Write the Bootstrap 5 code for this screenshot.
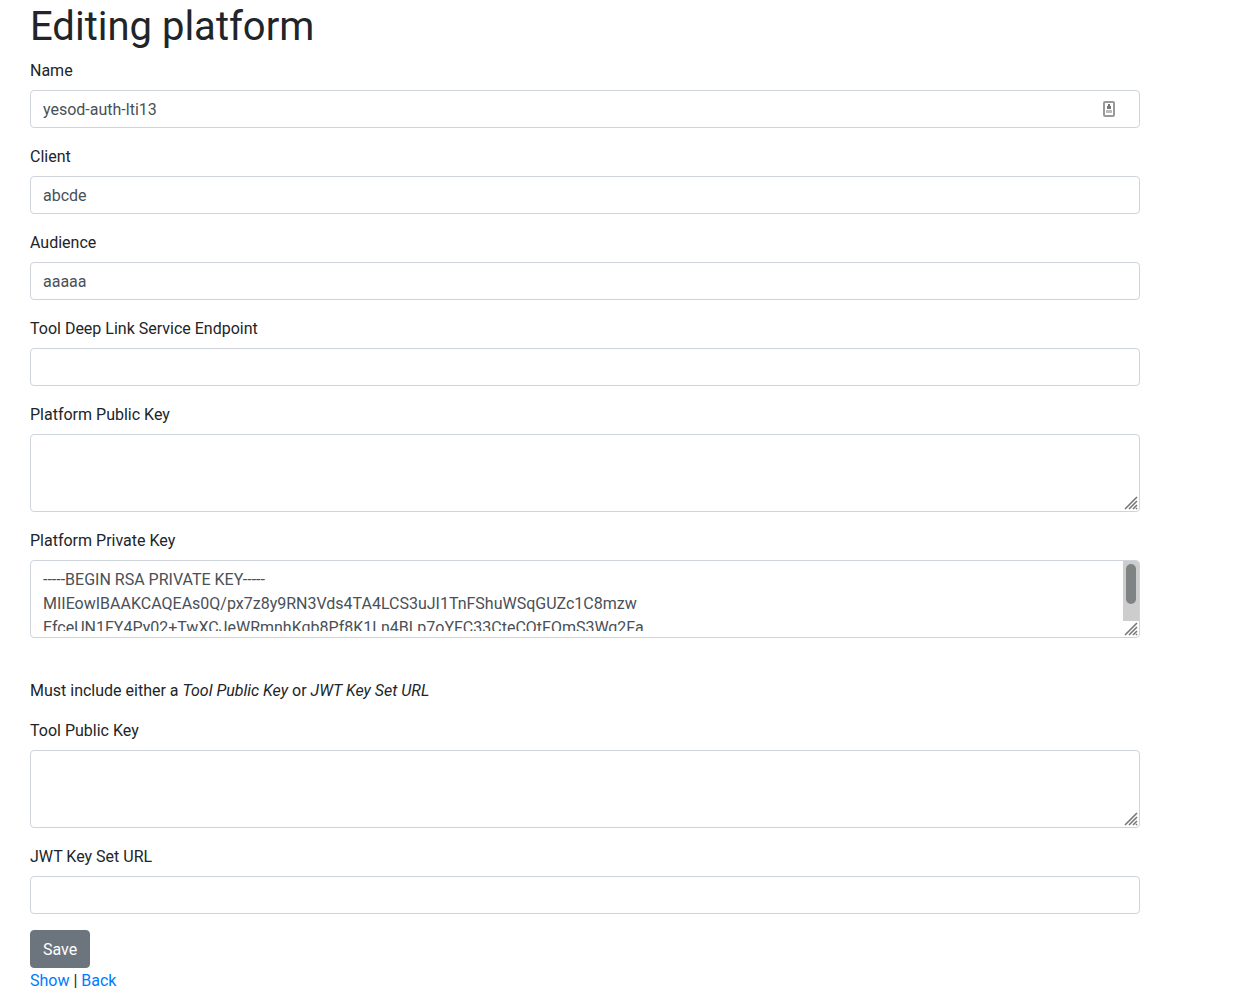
<!DOCTYPE html>
<html lang="en">
<head>
<meta charset="utf-8">
<meta name="viewport" content="width=device-width, initial-scale=1">
<title>Editing platform</title>
<link href="https://cdn.jsdelivr.net/npm/bootstrap@5.3.0/dist/css/bootstrap.min.css" rel="stylesheet">
<style>
  body { font-family: Roboto, "Liberation Sans", sans-serif; color: #212529; }
  .platform-page { max-width: 1140px; padding: 3px 15px 8px; margin-left: 15px; margin-right: 15px; }
  .platform-page h1 { font-size: 40px; font-weight: 400; margin-bottom: 7px; }
  .field { padding-top: 1px; margin-bottom: 16px; }
  .field label { display: block; margin-bottom: 7px; }
  .key-hint { padding-top: 1px; margin-bottom: 15px; }
  .page-links { padding-top: 1px; }
  .form-control, .key-text { color: #495057; }
  .form-control { border-color: #ced4da; border-radius: 4px; padding-top: 7px; padding-bottom: 5px; }
  .form-control.key-box { position: relative; padding-top: 6px; padding-bottom: 6px; }
  .key-text { display: block; width: 100%; height: 64px; padding: 1px 0 0; border: 0; outline: 0; background: transparent; resize: none; overflow: hidden; line-height: 24px; }
  .key-grip { position: absolute; right: 0; bottom: 0; }
  .key-scroll { position: absolute; top: 0; right: 0; width: 16px; height: 60px; padding: 3px; background: #cdcdcd; border-top-right-radius: 3px; }
  .key-thumb { width: 10px; height: 40px; border-radius: 5px; background: #7f8383; }
  .name-icon { position: absolute; right: 25px; top: 11px; }
  .btn-save { background: #6c757d; border-color: #6c757d; color: #fff; border-radius: 4px; padding-top: 7px; padding-bottom: 5px; }
  a { color: #007bff; text-decoration: none; }
</style>
<script src="https://cdn.jsdelivr.net/npm/bootstrap@5.3.0/dist/js/bootstrap.bundle.min.js"></script>
</head>
<body>
<svg class="d-none" aria-hidden="true">
  <symbol id="grip" viewBox="0 0 16 16"><path d="M2 14 14 2M6 14l8-8M10 14l4-4M13 14l1-1" fill="none" stroke="#777" stroke-width="1.6"/></symbol>
</svg>
<main class="platform-page">
  <h1>Editing platform</h1>
  <form>
    <div class="field">
      <label for="name">Name</label>
      <div class="position-relative">
        <input class="form-control" id="name" type="text" value="yesod-auth-lti13">
        <svg class="name-icon" width="12" height="16" viewBox="0 0 12 16" aria-hidden="true"><rect x="1" y="1" width="10" height="14" rx="1" fill="#fff" stroke="#999" stroke-width="2"/><path d="M5 3h2v2h1v3H4V5h1z" fill="#777"/><path d="M3 9h6v3H3z" fill="#bbb"/></svg>
      </div>
    </div>
    <div class="field">
      <label for="client">Client</label>
      <input class="form-control" id="client" type="text" value="abcde">
    </div>
    <div class="field">
      <label for="audience">Audience</label>
      <input class="form-control" id="audience" type="text" value="aaaaa">
    </div>
    <div class="field">
      <label for="deep-link">Tool Deep Link Service Endpoint</label>
      <input class="form-control" id="deep-link" type="text">
    </div>
    <div class="field">
      <label for="public-key">Platform Public Key</label>
      <div class="form-control key-box">
        <textarea class="key-text" id="public-key"></textarea>
        <svg class="key-grip" width="16" height="16" aria-hidden="true"><use href="#grip"/></svg>
      </div>
    </div>
    <div class="field">
      <label for="private-key">Platform Private Key</label>
      <div class="form-control key-box">
        <textarea class="key-text" id="private-key">-----BEGIN RSA PRIVATE KEY-----
MIIEowIBAAKCAQEAs0Q/px7z8y9RN3Vds4TA4LCS3uJI1TnFShuWSqGUZc1C8mzw
EfceUN1FY4Py02+TwXCJeWRmnhKqb8Pf8K1Ln4BLp7oYFC33CteCQtFQmS3Wg2Fa</textarea>
        <div class="key-scroll" aria-hidden="true"><div class="key-thumb"></div></div>
        <svg class="key-grip" width="16" height="16" aria-hidden="true"><use href="#grip"/></svg>
      </div>
    </div>
    <br>
    <p class="key-hint">Must include either a <em>Tool Public Key</em> or <em>JWT Key Set URL</em></p>
    <div class="field">
      <label for="tool-key">Tool Public Key</label>
      <div class="form-control key-box">
        <textarea class="key-text" id="tool-key"></textarea>
        <svg class="key-grip" width="16" height="16" aria-hidden="true"><use href="#grip"/></svg>
      </div>
    </div>
    <div class="field">
      <label for="jwt-url">JWT Key Set URL</label>
      <input class="form-control" id="jwt-url" type="text">
    </div>
    <button class="btn btn-save d-block" type="submit">Save</button>
  </form>
  <div class="page-links"><a href="#show">Show</a> | <a href="#back">Back</a></div>
</main>
</body>
</html>
